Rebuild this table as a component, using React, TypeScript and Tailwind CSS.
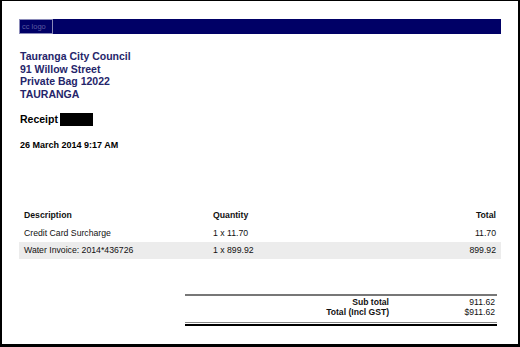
import { JSX } from "react";

interface LineItem {
  description: string;
  quantity: string;
  total: string;
}

const items: LineItem[] = [
  { description: "Credit Card Surcharge", quantity: "1 x 11.70", total: "11.70" },
  { description: "Water Invoice: 2014*436726", quantity: "1 x 899.92", total: "899.92" },
];

function App(): JSX.Element {
  return (
    <div className="w-[520px] h-[347px] box-border border-t border-l-2 border-r-2 border-b-[3px] border-black bg-white font-['Liberation_Sans',Arial,sans-serif] overflow-hidden">
      <div className="pl-[17px] pr-[17px] pt-[18px]">
        {/* header bar with logo placeholder */}
        <div className="h-[15px] bg-[#000066] flex">
          <div className="w-[34px] h-full border border-[#8a8ab8] flex items-center pl-[2px]">
            <span className="text-[7.5px] leading-none text-[#5c5ca0]">cc logo</span>
          </div>
        </div>

        <div className="mt-[16px] pl-[1px] text-[10.5px] leading-[12.7px] font-bold text-[#25256a]">
          <div>Tauranga City Council</div>
          <div>91 Willow Street</div>
          <div>Private Bag 12022</div>
          <div>TAURANGA</div>
        </div>

        <div className="mt-[12px] pl-[1px] h-[14px] flex items-center text-[10.5px] font-bold text-black">
          <span>Receipt</span>
          <span className="ml-[2px] w-[33px] h-[13px] bg-black"></span>
        </div>

        <div className="mt-[13px] pl-[1px] text-[9px] leading-[11px] font-bold text-black">
          26 March 2014 9:17 AM
        </div>

        {/* line items */}
        <div className="mt-[56px] text-[8.7px] text-[#111]">
          <div className="h-[18px] flex items-center font-bold px-[5px]">
            <div className="w-[189px]">Description</div>
            <div className="flex-1">Quantity</div>
            <div className="text-right">Total</div>
          </div>
          {items.map((item, i) => (
            <div
              key={item.description}
              className={
                i % 2 === 1
                  ? "h-[17px] flex items-center px-[5px] bg-[#ececec]"
                  : "h-[17px] flex items-center px-[5px]"
              }
            >
              <div className="w-[189px]">{item.description}</div>
              <div className="flex-1">{item.quantity}</div>
              <div className="text-right">{item.total}</div>
            </div>
          ))}
        </div>

        {/* totals */}
        <div className="mt-[35px] ml-[166px] mr-[4px] text-[8.6px] text-[#111]">
          <div className="h-[2px] bg-[#777]"></div>
          <div className="h-[10.5px] mt-[1px] flex items-center">
            <div className="w-[204px] text-right font-bold">Sub total</div>
            <div className="flex-1 text-right pr-[2px]">911.62</div>
          </div>
          <div className="h-[10.5px] flex items-center">
            <div className="w-[204px] text-right font-bold">Total (Incl GST)</div>
            <div className="flex-1 text-right pr-[2px]">$911.62</div>
          </div>
          <div className="mt-[4px] h-[1px] bg-[#888]"></div>
          <div className="mt-[1px] h-[2px] bg-black"></div>
        </div>
      </div>
    </div>
  );
}

export default App;
